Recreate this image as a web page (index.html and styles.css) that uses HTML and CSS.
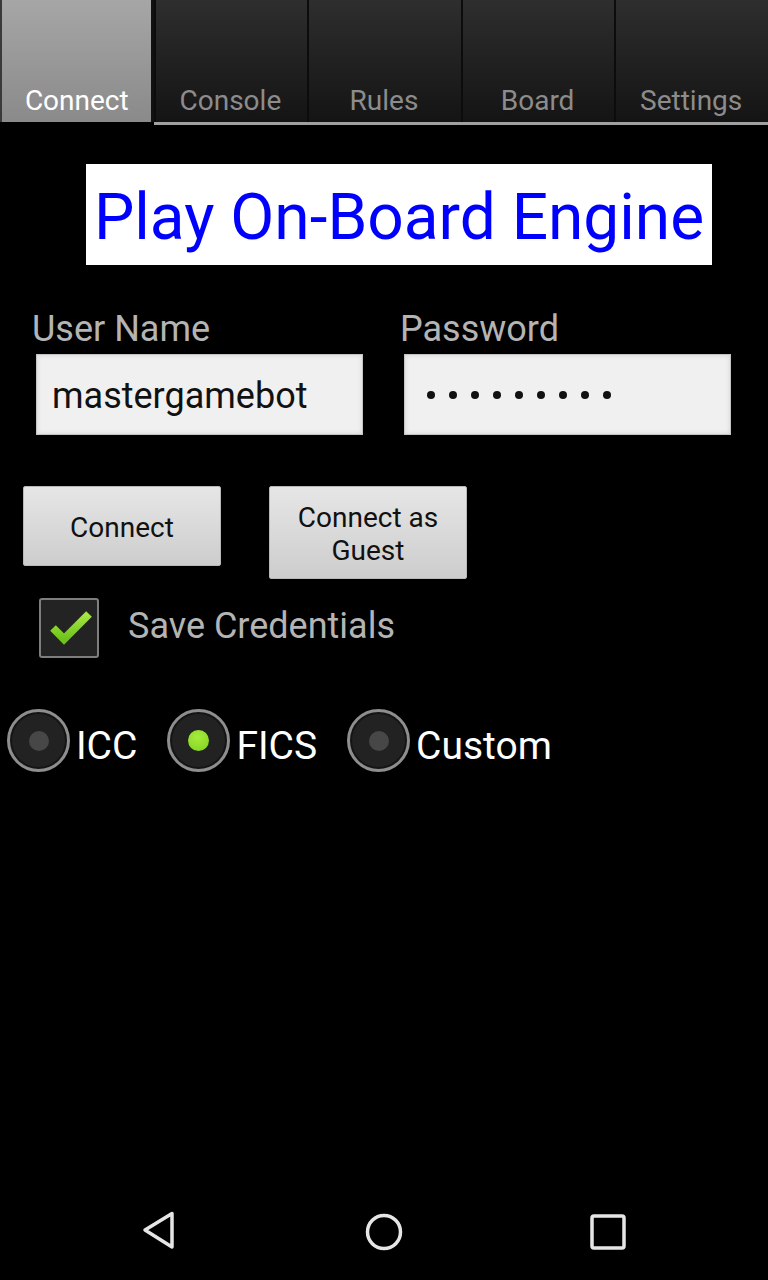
FILE: index.html
```html
<!DOCTYPE html>
<html>
<head>
<meta charset="utf-8">
<link rel="stylesheet" href="styles.css">
</head>
<body>
<div class="screen">
  <nav class="tabs">
    <div class="tab active">Connect</div>
    <div class="tab">Console</div>
    <div class="tab">Rules</div>
    <div class="tab">Board</div>
    <div class="tab">Settings</div>
  </nav>

  <div class="title">Play On-Board Engine</div>

  <div class="fields">
    <div class="field">
      <div class="label">User Name</div>
      <div class="input">mastergamebot</div>
    </div>
    <div class="field">
      <div class="label">Password</div>
      <div class="input password">
        <span class="dot"></span><span class="dot"></span><span class="dot"></span>
        <span class="dot"></span><span class="dot"></span><span class="dot"></span>
        <span class="dot"></span><span class="dot"></span><span class="dot"></span>
      </div>
    </div>
  </div>

  <div class="buttons">
    <div class="btn">Connect</div>
    <div class="btn">Connect as<br>Guest</div>
  </div>

  <div class="check-row">
    <div class="checkbox">
      <svg width="60" height="60" viewBox="0 0 60 60">
        <defs>
          <linearGradient id="g" x1="0" y1="0" x2="0" y2="1">
            <stop offset="0" stop-color="#a6e83f"/>
            <stop offset="1" stop-color="#6fc21c"/>
          </linearGradient>
        </defs>
        <polyline points="14,30 25,41 50,16" fill="none" stroke="url(#g)" stroke-width="8" stroke-linejoin="miter"/>
      </svg>
    </div>
    <div class="check-label">Save Credentials</div>
  </div>

  <div class="radios">
    <div class="radio-item"><span class="radio"><span class="radio-dot"></span></span><span class="radio-label">ICC</span></div>
    <div class="radio-item"><span class="radio"><span class="radio-dot on"></span></span><span class="radio-label">FICS</span></div>
    <div class="radio-item"><span class="radio"><span class="radio-dot"></span></span><span class="radio-label">Custom</span></div>
  </div>

  <div class="navbar">
    <div class="nav-item">
      <svg width="40" height="44" viewBox="0 0 40 44">
        <polygon points="7,20 34,3.5 34,37" fill="none" stroke="#e6e6e6" stroke-width="3.5" stroke-linejoin="round"/>
      </svg>
    </div>
    <div class="nav-item">
      <svg width="40" height="40" viewBox="0 0 40 40">
        <circle cx="20" cy="20" r="16.5" fill="none" stroke="#e6e6e6" stroke-width="3.5"/>
      </svg>
    </div>
    <div class="nav-item">
      <svg width="40" height="40" viewBox="0 0 40 40">
        <rect x="4" y="4" width="32" height="32" rx="2" fill="none" stroke="#e6e6e6" stroke-width="3.5"/>
      </svg>
    </div>
  </div>
</div>
</body>
</html>
```

FILE: styles.css
```css
* { box-sizing: border-box; }

html, body {
  margin: 0;
  padding: 0;
  background: #000;
}

body {
  font-family: Roboto, "Noto Sans", "Liberation Sans", sans-serif;
}

.screen {
  width: 768px;
  height: 1280px;
  display: flex;
  flex-direction: column;
  background: #000;
}

/* Tabs */
.tabs {
  display: flex;
  height: 125px;
}

.tab {
  flex: 1;
  display: flex;
  align-items: flex-end;
  justify-content: center;
  padding-bottom: 5px;
  font-size: 28px;
  line-height: 33px;
  color: #8c8c8c;
  background: linear-gradient(#2e2e2e, #141414);
  border-bottom: 3px solid #a0a0a0;
  box-shadow: inset 2px 0 0 #0c0c0c;
}

.tab.active {
  color: #fff;
  background: linear-gradient(#a6a6a6, #8a8a8a);
  border-bottom: 3px solid #000;
  box-shadow: inset 2px 0 0 #3a3a3a, inset -3px 0 0 #111;
}

/* Title */
.title {
  margin-top: 39px;
  margin-left: 86px;
  width: 626px;
  height: 101px;
  background: #fff;
  color: #0000ff;
  font-size: 64px;
  line-height: 95px;
  padding-top: 6px;
  text-align: center;
  white-space: nowrap;
}

/* Fields */
.fields {
  display: grid;
  grid-template-columns: 368px 368px;
  padding-left: 32px;
  margin-top: 43px;
}

.label {
  font-size: 36px;
  line-height: 42px;
  color: #b4b4b4;
}

.input {
  margin-top: 4px;
  margin-left: 4px;
  width: 327px;
  height: 81px;
  background: #f0f0f0;
  border: 1px solid #c4c4c4;
  box-shadow: inset 0 0 5px rgba(0, 0, 0, 0.12);
  padding-left: 15px;
  padding-top: 2px;
  font-size: 36px;
  line-height: 78px;
  color: #111;
}

.password {
  display: flex;
  align-items: center;
  gap: 14px;
  padding-left: 22px;
  padding-top: 0;
}

.dot {
  width: 8px;
  height: 8px;
  border-radius: 50%;
  background: #111;
}

/* Buttons */
.buttons {
  display: flex;
  align-items: flex-start;
  gap: 48px;
  padding-left: 23px;
  margin-top: 51px;
}

.btn {
  width: 198px;
  min-height: 80px;
  padding: 14px 0 11px;
  display: flex;
  align-items: center;
  justify-content: center;
  text-align: center;
  font-size: 28px;
  line-height: 33px;
  color: #111;
  background: linear-gradient(#e6e6e6, #cdcdcd);
  border: 1px solid #b8b8b8;
  border-radius: 2px;
}

/* Checkbox */
.check-row {
  display: flex;
  align-items: center;
  gap: 29px;
  padding-left: 39px;
  margin-top: 19px;
}

.checkbox {
  width: 60px;
  height: 60px;
  border: 2px solid #7e7e7e;
  border-radius: 3px;
  background: #232323;
  position: relative;
  overflow: hidden;
}

.checkbox svg {
  position: absolute;
  left: -2px;
  top: -2px;
}

.check-label {
  font-size: 36px;
  line-height: 42px;
  color: #b4b4b4;
  padding-bottom: 4px;
}

/* Radios */
.radios {
  display: flex;
  align-items: center;
  gap: 30px;
  padding-left: 7px;
  margin-top: 51px;
}

.radio-item {
  display: flex;
  align-items: center;
  gap: 6px;
}

.radio {
  width: 63px;
  height: 63px;
  border-radius: 50%;
  border: 3px solid #8e8e8e;
  background: #222;
  box-shadow: inset 0 0 0 2px #151515;
  display: flex;
  align-items: center;
  justify-content: center;
}

.radio-dot {
  width: 20px;
  height: 20px;
  border-radius: 50%;
  background: #474747;
}

.radio-dot.on {
  width: 21px;
  height: 21px;
  background: radial-gradient(circle at 45% 35%, #a6ec3c, #7fd020);
}

.radio-label {
  font-size: 39px;
  line-height: 46px;
  color: #fff;
  padding-top: 10px;
}

/* Navigation bar */
.navbar {
  margin-top: auto;
  height: 96px;
  display: grid;
  grid-template-columns: 1fr 1fr 1fr;
  padding: 0 48px 0 48px;
  align-items: center;
}

.nav-item {
  display: flex;
  justify-content: center;
  align-items: center;
}

.nav-item:first-child svg {
  margin-left: -4px;
}
```
